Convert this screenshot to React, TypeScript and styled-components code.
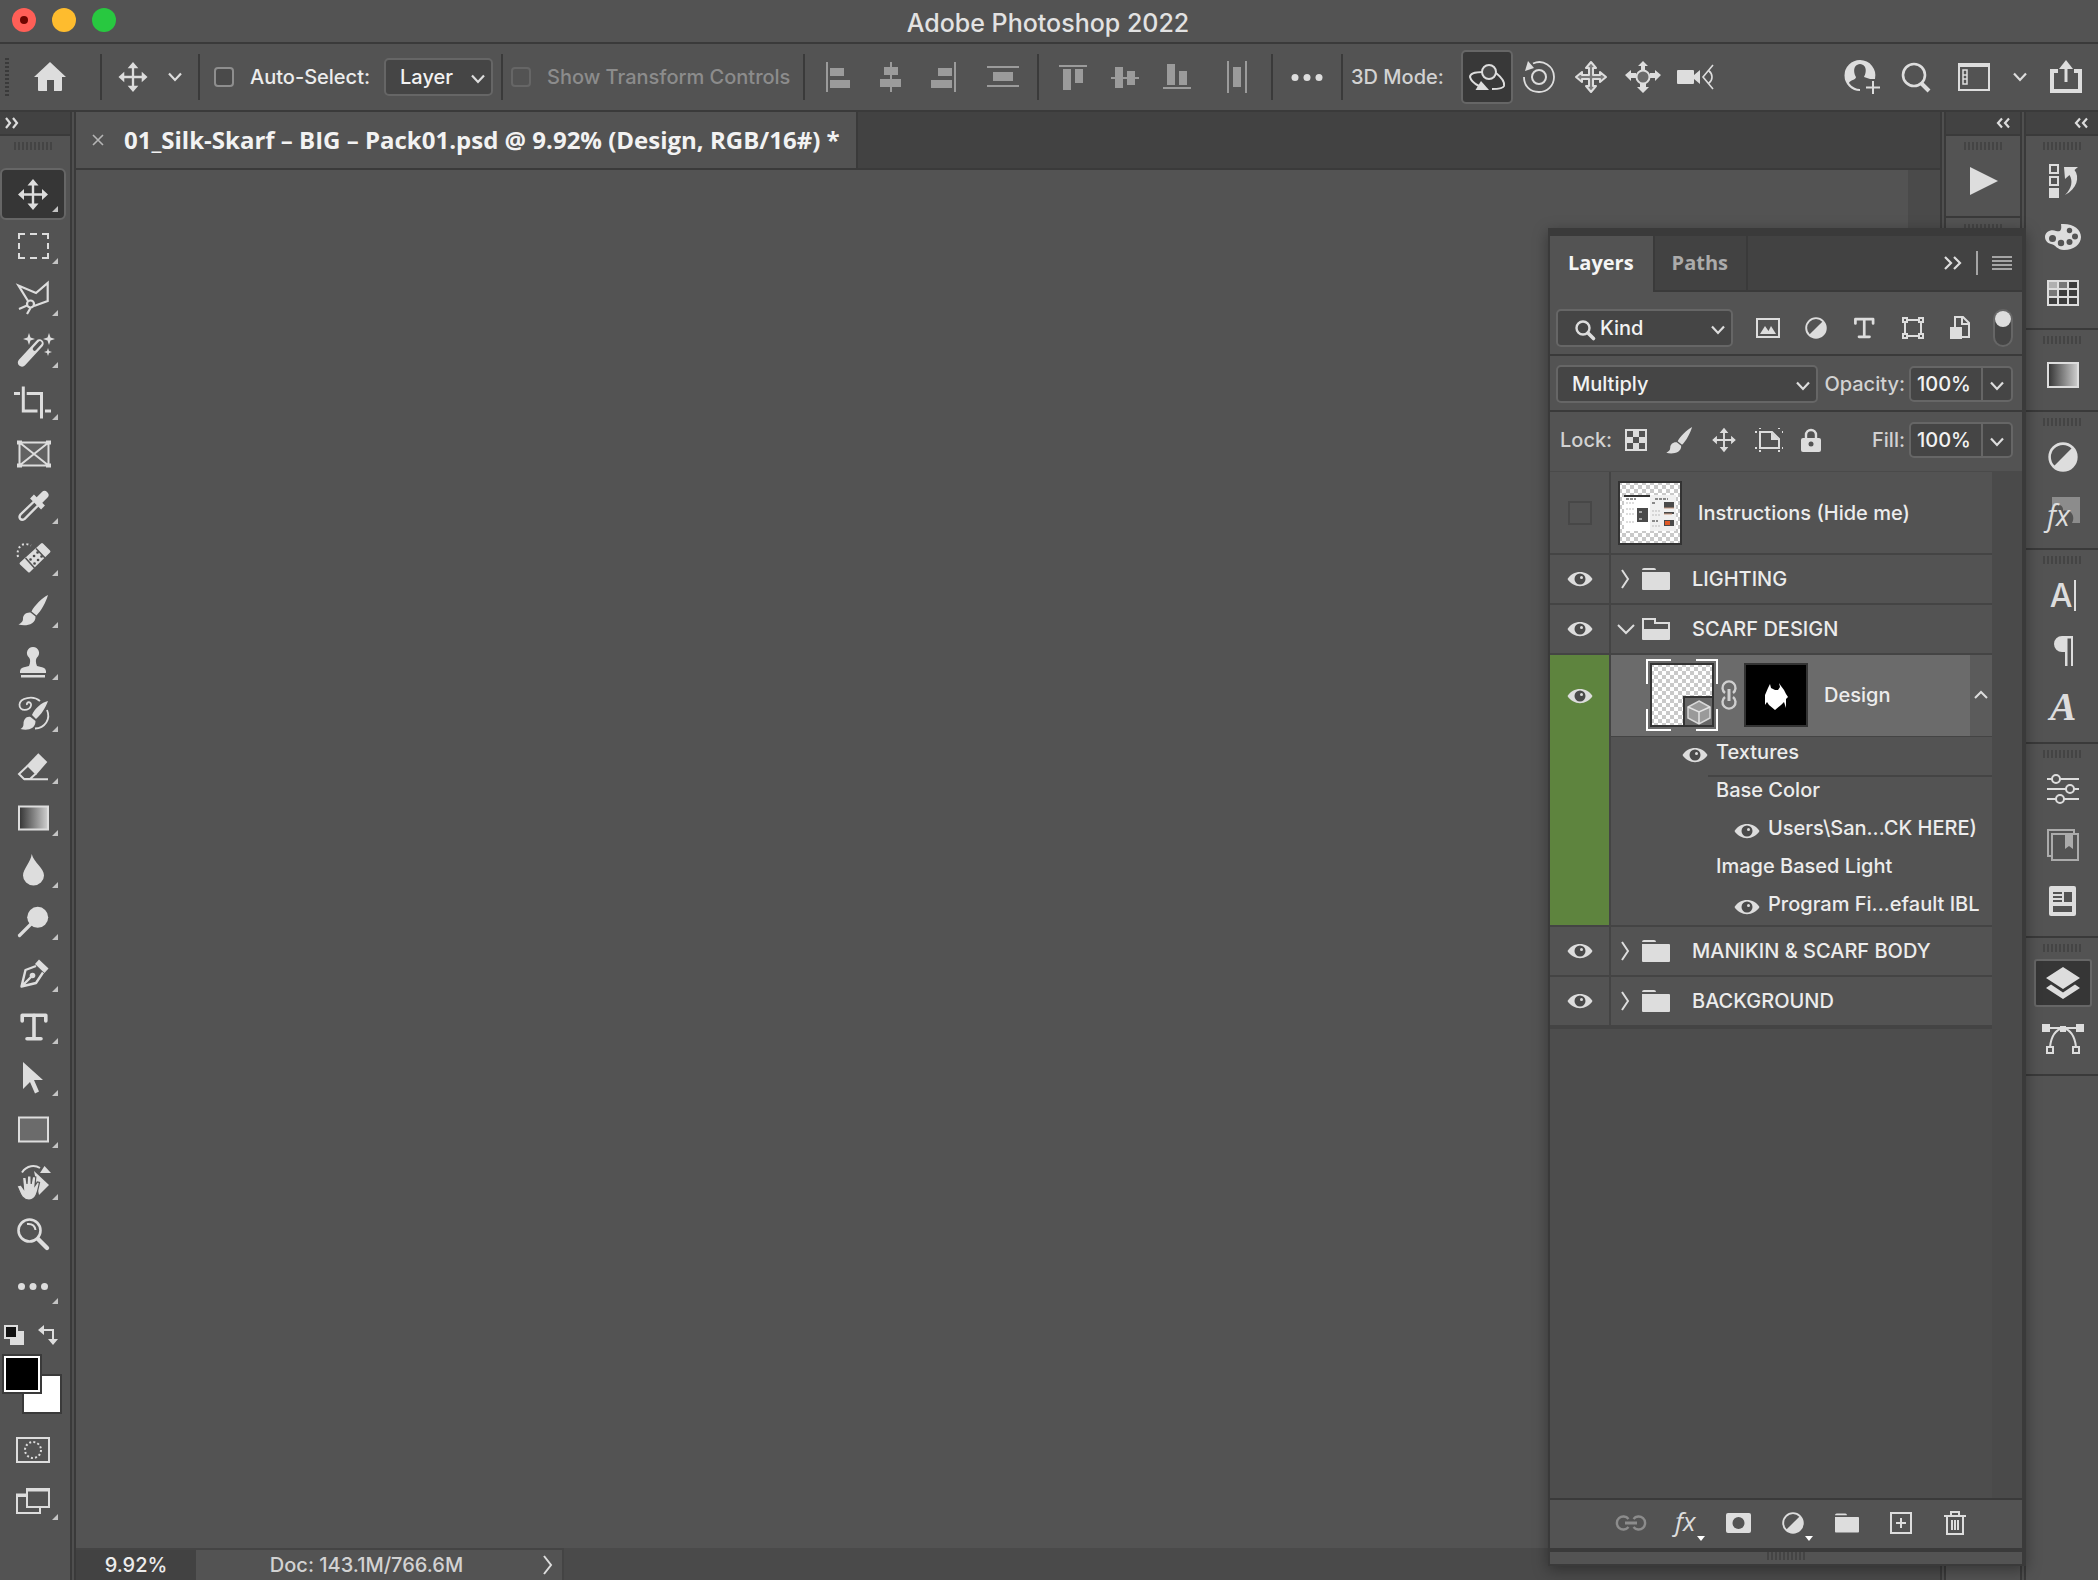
import React from "react";
import styled, { createGlobalStyle, css } from "styled-components";

const c = {
  base: "#535353",
  dark: "#424242",
  line: "#3a3a3a",
  rule: "#444444",
  well: "#4a4a4a",
  field: "#454545",
  edge: "#666666",
  icon: "#dddddd",
  text: "#ececec",
  soft: "#d2d2d2",
  dim: "#8c8c8c",
  green: "#5e843e",
};

const ui = `Inter, "Liberation Sans", sans-serif`;
const heading = `"Open Sans", "Noto Sans", sans-serif`;

const Global = createGlobalStyle`
  * { box-sizing: border-box; }
  body { margin: 0; background: ${c.base}; font-family: ${ui}; font-size: 20px; font-weight: 500; line-height: 26px; color: ${c.text}; }
  button, select, input { font: inherit; color: inherit; margin: 0; padding: 0; border: 0; background: none; }
  ul { list-style: none; margin: 0; padding: 0; }
  svg { display: block; flex: none; overflow: visible; }
`;

const Window = styled.div`
  display: flex;
  flex-direction: column;
  height: 100vh;
  min-width: 1900px;
  overflow: hidden;
`;

/* Title bar */

const TitleBar = styled.header`
  display: grid;
  grid-template-columns: 1fr auto 1fr;
  align-items: center;
  height: 44px;
  padding: 0 14px 0 12px;
  border-bottom: 2px solid ${c.line};
`;

const Lights = styled.div`
  display: flex;
  gap: 16px;
  padding-bottom: 2px;
`;

const Light = styled.button<{ $color: string; $dirty?: boolean }>`
  display: grid;
  place-items: center;
  width: 24px;
  height: 24px;
  border-radius: 50%;
  background: ${(p) => p.$color};
  ${(p) =>
    p.$dirty &&
    css`
      &::after {
        content: "";
        width: 8px;
        height: 8px;
        border-radius: 50%;
        background: #6e0600;
      }
    `}
`;

const Title = styled.h1`
  margin: 0;
  padding-top: 4px;
  font-size: 25px;
  font-weight: 500;
  line-height: 32px;
  color: #e2e2e2;
`;

/* Options bar */

const OptionsBar = styled.div`
  display: flex;
  align-items: center;
  height: 68px;
  border-bottom: 2px solid ${c.line};
`;

const Group = styled.div<{ $width?: number; $pad?: number; $gap?: number; $last?: boolean }>`
  display: flex;
  align-items: center;
  height: 46px;
  width: ${(p) => (p.$width ? p.$width + "px" : "auto")};
  padding-left: ${(p) => p.$pad ?? 0}px;
  gap: ${(p) => p.$gap ?? 0}px;
  border-right: ${(p) => (p.$last ? "0" : `2px solid ${c.line}`)};
  white-space: nowrap;
`;

const SideGrip = styled.span`
  width: 4px;
  height: 38px;
  background: repeating-linear-gradient(${c.line} 0 2px, transparent 2px 4px);
`;

const IconButton = styled.button<{ $width?: number; $active?: boolean }>`
  display: grid;
  place-items: center;
  width: ${(p) => p.$width ?? 52}px;
  height: 54px;
  border-radius: 5px;
  border: 2px solid ${(p) => (p.$active ? c.edge : "transparent")};
  background: ${(p) => (p.$active ? "#383838" : "none")};
`;

const AlignGroup = styled(Group)`
  & > :last-child {
    margin-left: 8px;
  }
`;

const Check = styled.label<{ $off?: boolean }>`
  display: flex;
  align-items: center;
  gap: 16px;
  color: ${(p) => (p.$off ? c.dim : c.text)};
  input {
    appearance: none;
    width: 20px;
    height: 20px;
    border: 2px solid ${(p) => (p.$off ? c.edge : "#8e8e8e")};
    border-radius: 4px;
    background: ${(p) => (p.$off ? "none" : "#4a4a4a")};
  }
`;

const ModeLabel = styled.span`
  width: 110px;
  color: ${c.soft};
`;

const AppActions = styled.div`
  display: flex;
  align-items: center;
  gap: 22px;
  margin-left: auto;
  padding-right: 16px;
`;

const Plain = styled.button`
  display: block;
`;

const Picker = styled.div<{ $width: number }>`
  display: grid;
  grid-template-columns: 1fr 23px;
  align-items: center;
  width: ${(p) => p.$width}px;
  height: 38px;
  select {
    grid-area: 1 / 1 / 2 / 3;
    appearance: none;
    height: 38px;
    padding-left: 14px;
    border: 2px solid ${c.edge};
    border-radius: 5px;
    background: ${c.field};
    color: #f2f2f2;
  }
  svg {
    grid-area: 1 / 2;
    pointer-events: none;
    z-index: 1;
    margin-top: 3px;
  }
`;

const KindPicker = styled(Picker)`
  grid-template-columns: 44px 1fr 23px;
  select {
    grid-area: 1 / 1 / 2 / 4;
    padding-left: 42px;
  }
  svg {
    grid-area: 1 / 3;
  }
  svg:first-of-type {
    grid-area: 1 / 1;
    justify-self: end;
    margin-right: 5px;
  }
`;

/* Workspace */

const Workspace = styled.div`
  position: relative;
  display: flex;
  flex: 1;
  min-height: 0;
`;

const DockHeader = styled.div<{ $right?: boolean }>`
  display: flex;
  align-items: center;
  justify-content: ${(p) => (p.$right ? "flex-end" : "flex-start")};
  height: 24px;
  padding: 0 ${(p) => (p.$right ? 9 : 5)}px;
  background: ${c.dark};
  border-bottom: 2px solid ${c.line};
`;

const Seam = styled.div`
  width: 6px;
  border: solid ${c.line};
  border-width: 0 2px;
  background: #4f4f4f;
`;

const Grip = styled.div`
  width: 38px;
  height: 8px;
  background: repeating-linear-gradient(90deg, ${c.rule} 0 2px, transparent 2px 4px);
`;

const Toolbar = styled.nav`
  display: flex;
  flex-direction: column;
  width: 70px;
  & > ${Grip} {
    margin: 6px 14px 18px;
  }
`;

const Tool = styled.button<{ $active?: boolean; $fly?: boolean }>`
  position: relative;
  display: grid;
  place-items: center;
  width: 66px;
  height: 52px;
  border: 2px solid ${(p) => (p.$active ? c.edge : "transparent")};
  border-radius: 6px;
  background: ${(p) => (p.$active ? "#363636" : "none")};
  ${(p) =>
    p.$fly &&
    css`
      &::after {
        content: "";
        position: absolute;
        right: 6px;
        bottom: 6px;
        border: solid transparent;
        border-width: 6px 0 0 6px;
        border-bottom: 6px solid #c4c4c4;
        border-top: 0;
      }
    `}
`;

const ColorRow = styled.div`
  display: flex;
  justify-content: space-between;
  width: 62px;
  padding: 13px 4px 9px;
`;

const Swatches = styled.div`
  display: grid;
  grid-template-columns: 20px 20px 20px;
  grid-template-rows: 20px 20px 20px;
  margin-left: 2px;
`;

const Swatch = styled.button<{ $front?: boolean }>`
  grid-area: ${(p) => (p.$front ? "1 / 1 / 3 / 3" : "2 / 2 / 4 / 4")};
  z-index: ${(p) => (p.$front ? 1 : 0)};
  border: 2px solid ${c.line};
  background: ${(p) => (p.$front ? "#000" : "#fff")};
  box-shadow: ${(p) => (p.$front ? "inset 0 0 0 2px #fff" : "none")};
`;

const ModeTools = styled.div`
  padding-top: 10px;
`;

const Document = styled.main`
  display: flex;
  flex-direction: column;
  flex: 1;
  min-width: 0;
`;

const Tabs = styled.div`
  display: flex;
  height: 58px;
  background: ${c.dark};
  border-bottom: 2px solid ${c.line};
`;

const DocTab = styled.div`
  display: flex;
  align-items: center;
  gap: 20px;
  min-width: 780px;
  padding: 0 16px;
  border-right: 2px solid ${c.line};
  background: ${c.base};
  font: 700 24px/30px ${heading};
  color: #f2f2f2;
  white-space: nowrap;
`;

const Canvas = styled.div`
  display: flex;
  justify-content: flex-end;
  flex: 1;
`;

const ScrollTrack = styled.div`
  width: 32px;
  background: ${c.well};
`;

const StatusBar = styled.footer`
  display: flex;
  height: 32px;
  background: ${c.well};
`;

const ZoomField = styled.input`
  width: 120px;
  border-top: 2px solid ${c.rule};
  background: ${c.dark};
  text-align: center;
`;

const DocInfo = styled.button`
  display: grid;
  grid-template-columns: 1fr 10px;
  align-items: center;
  gap: 6px;
  width: 368px;
  padding-right: 9px;
  border: solid ${c.rule};
  border-width: 2px 2px 0 0;
  background: ${c.base};
  color: ${c.soft};
`;

const Dock = styled.aside<{ $width: number }>`
  width: ${(p) => p.$width}px;
`;

const DockGroup = styled.div`
  display: flex;
  flex-direction: column;
  align-items: center;
  padding: 6px 0 7px;
  border-bottom: 2px solid ${c.line};
  & > ${Grip} {
    margin-bottom: 3px;
  }
`;

const DockSlot = styled.div`
  display: grid;
  place-items: center;
  height: 56px;
  padding-left: 2px;
`;

const DockButton = styled.button<{ $active?: boolean }>`
  display: grid;
  place-items: center;
  width: 58px;
  height: 48px;
  border: 2px solid ${(p) => (p.$active ? c.edge : "transparent")};
  border-radius: 3px;
  background: ${(p) => (p.$active ? "#363636" : "none")};
`;

const ScriptGlyph = styled.span`
  font: italic 700 40px/36px "Liberation Serif", serif;
  color: ${c.icon};
`;

const CharGlyph = styled.span`
  padding-right: 2px;
  border-right: 2px solid ${c.icon};
  font: 500 32px/31px ${ui};
  color: ${c.icon};
`;

/* Layers panel, floating over the canvas and the first dock column */

const Panel = styled.section`
  position: absolute;
  top: 116px;
  right: 72px;
  bottom: 14px;
  display: flex;
  flex-direction: column;
  width: 478px;
  border: solid ${c.line};
  border-width: 8px 4px 2px 2px;
  background: ${c.base};
  box-shadow: 0 4px 14px rgba(0, 0, 0, 0.35);
`;

const PanelTabs = styled.div`
  display: flex;
  height: 56px;
  background: ${c.dark};
`;

const PanelTab = styled.button<{ $active?: boolean }>`
  padding: ${(p) => (p.$active ? "0 19px 2px 18px" : "0 18px 0 17px")};
  border-right: 2px solid ${c.line};
  border-bottom: ${(p) => (p.$active ? "0" : `2px solid ${c.line}`)};
  background: ${(p) => (p.$active ? c.base : "none")};
  color: ${(p) => (p.$active ? "#f5f5f5" : "#ababab")};
  font: 700 20px/30px ${heading};
`;

const PanelTabTools = styled.div`
  display: flex;
  flex: 1;
  align-items: center;
  justify-content: flex-end;
  gap: 14px;
  padding-right: 10px;
  border-bottom: 2px solid ${c.line};
`;

const Bar = styled.span`
  width: 2px;
  height: 24px;
  background: #a5a5a5;
`;

const PanelRow = styled.div<{ $height: number; $top?: number; $bottom?: number; $soft?: boolean }>`
  display: flex;
  align-items: center;
  height: ${(p) => p.$height}px;
  padding: ${(p) => p.$top ?? 0}px 9px ${(p) => p.$bottom ?? 0}px 6px;
  border-bottom: ${(p) => (p.$soft ? `1px solid ${c.well}` : `2px solid ${c.line}`)};
`;

const FilterIcons = styled.div`
  display: flex;
  flex: 1;
  align-items: center;
  justify-content: space-between;
  padding: 0 22px 0 23px;
`;

const Switch = styled.input`
  appearance: none;
  width: 20px;
  height: 38px;
  border: 2px solid ${c.edge};
  border-radius: 10px;
  background: ${c.field};
  &::before {
    content: "";
    display: block;
    width: 16px;
    height: 16px;
    border-radius: 50%;
    background: ${c.icon};
  }
`;

const FieldLabel = styled.label`
  margin-left: auto;
  padding-right: 4px;
  color: ${c.soft};
`;

const Combo = styled.div`
  display: flex;
  width: 104px;
  height: 36px;
  border: 2px solid ${c.edge};
  border-radius: 5px;
  background: ${c.field};
  input {
    width: 72px;
    padding-left: 6px;
    border-right: 2px solid ${c.edge};
    color: #f2f2f2;
  }
  button {
    display: grid;
    flex: 1;
    place-items: center;
    padding-top: 3px;
  }
`;

const LockIcons = styled.div`
  display: flex;
  align-items: center;
  gap: 18px;
  padding-left: 13px;
`;

const LockLabel = styled.span`
  padding-left: 4px;
  color: ${c.soft};
`;

const ListArea = styled.div`
  flex: 1;
  padding-right: 30px;
  background: linear-gradient(90deg, #4d4d4d calc(100% - 30px), ${c.well} 0);
`;

const LayerList = styled.ul`
  border-bottom: 2px solid ${c.rule};
`;

const LayerItem = styled.li`
  display: flex;
  border-bottom: 2px solid ${c.rule};
  background: ${c.base};
`;

const EyeCell = styled.div<{ $green?: boolean }>`
  width: 61px;
  border-right: 2px solid ${c.rule};
  background: ${(p) => (p.$green ? c.green : "none")};
`;

const EyeButton = styled.button<{ $height: number }>`
  display: grid;
  place-items: center;
  width: 100%;
  height: ${(p) => p.$height}px;
  padding-left: 1px;
`;

const HiddenEye = styled.span`
  width: 24px;
  height: 24px;
  border: 2px solid #474747;
`;

const LayerBody = styled.div`
  flex: 1;
  min-width: 0;
`;

const LayerLine = styled.div<{ $height: number; $pad?: number }>`
  display: flex;
  align-items: center;
  height: ${(p) => p.$height}px;
  padding-left: ${(p) => p.$pad ?? 7}px;
`;

const FolderMark = styled.span`
  display: flex;
  align-items: center;
  gap: 8px;
  width: 74px;
`;

const Selected = styled(LayerLine)`
  padding-bottom: 1px;
  background: linear-gradient(90deg, #6b6b6b calc(100% - 22px), #5b5b5b 0);
  border-bottom: 1px solid ${c.rule};
`;

const Name = styled.span`
  padding-left: 16px;
`;

const Expand = styled.button`
  width: 22px;
  margin-left: auto;
  display: grid;
  place-items: center;
`;

const SubList = styled.ul`
  display: flex;
  flex-direction: column;
  gap: 12px;
  padding-bottom: 8px;
`;

const SubEye = styled.span`
  padding-top: 5px;
`;

const SubHead = styled.div`
  display: flex;
  height: 40px;
  padding: 2px 0 0 71px;
  ${SubEye} {
    padding-top: 8px;
  }
`;

const SubHeadText = styled.span`
  flex: 1;
  padding-left: 8px;
  border-bottom: 2px solid ${c.rule};
`;

const SubItem = styled.li<{ $deep?: boolean }>`
  display: flex;
  align-items: center;
  gap: 8px;
  height: 26px;
  padding-left: ${(p) => (p.$deep ? 123 : 105)}px;
  white-space: nowrap;
`;

const PanelFooter = styled.div`
  display: flex;
  justify-content: center;
  height: 50px;
  padding: 0 0 2px 14px;
  border-top: 2px solid ${c.line};
`;

const FooterButton = styled.button<{ $menu?: boolean }>`
  position: relative;
  display: grid;
  place-items: center;
  width: 54px;
  ${(p) =>
    p.$menu &&
    css`
      &::after {
        content: "";
        position: absolute;
        right: 7px;
        bottom: 5px;
        border: solid transparent;
        border-width: 0 4px;
        border-top: 5px solid #fff;
      }
    `}
`;

const PanelResize = styled.div`
  display: flex;
  justify-content: center;
  height: 16px;
  border-top: 4px solid ${c.line};
`;

/* Icons */

type Draw = { w?: number; h?: number; children: React.ReactNode };
const Icon = ({ w = 32, h = 32, children }: Draw) => (
  <svg width={w} height={h} viewBox={`0 0 ${w} ${h}`} fill="none" stroke={c.icon} strokeWidth="2" aria-hidden="true">
    {children}
  </svg>
);
const solid = { fill: c.icon, stroke: "none" };

const Chevron = () => (
  <Icon w={16} h={10}>
    <path d="M2 1.500l6 6.500 6-6.500" strokeWidth="2.200" />
  </Icon>
);
const Doubles = ({ left, w = 16 }: { left?: boolean; w?: number }) => (
  <Icon w={w} h={12}>
    {left ? (
      <path d="M7 1.500L3 6l4 4.500M14 1.500L10 6l4 4.500" strokeWidth="2.200" />
    ) : (
      <path d={w > 16 ? "M1 0l6 6-6 6M10 0l6 6-6 6" : "M1 1l4 5-4 5M8 1l4 5-4 5"} strokeWidth="2.200" />
    )}
  </Icon>
);

const MovePath = () => (
  <g>
    <path d="M16 5v23M5 16.500h22" strokeWidth="2.400" />
    <path {...solid} d="M16 1l5.500 6.500h-11zM16 32l5.500-6.500h-11zM1 16.500l6-5.500v11zM31 16.500l-6-5.500v11z" />
  </g>
);
const Move = ({ size = 32 }: { size?: number }) => (
  <svg width={size} height={size} viewBox="0 0 32 33" stroke={c.icon} fill="none" aria-hidden="true">
    <MovePath />
  </svg>
);
const BrushPath = () => (
  <path {...solid} d="M31 1C25 4 17 12 14.500 17.500L19.500 21.500C24 17 29 8 31 1zM13.500 18.500C9 18 6 21 6 24.500 6 28 4 29 1.500 30.500 8 32.500 19 31 18.500 22.500z" />
);
const Brush = ({ size = 32 }: { size?: number }) => (
  <svg width={size} height={size} viewBox="0 0 32 32" aria-hidden="true">
    <BrushPath />
  </svg>
);
const TeePath = () => (
  <path
    d="M5.200 11V5.200h23.600V11M17 5v23.500M10 28.700h14"
    strokeWidth="3.600"
    strokeLinejoin="round"
    strokeLinecap="round"
  />
);

const HalfCircle = ({ size }: { size: number }) => (
  <svg width={size} height={size} viewBox="0 0 28 28" fill="none" stroke={c.icon} strokeWidth="2.400" aria-hidden="true">
    <circle cx="14" cy="14" r="12.500" />
    <path {...solid} d="M23 5A12.700 12.700 0 0 1 5 23z" />
  </svg>
);

const Eye = () => (
  <Icon w={26} h={16}>
    <path {...solid} d="M.5 8C6-1.500 20-1.500 25.500 8 20 17.500 6 17.500.5 8z" />
    <circle cx="13" cy="8" r="5.500" fill="#4a4a4a" stroke="none" />
    <circle cx="14.500" cy="6.500" r="1.500" {...solid} />
  </Icon>
);
const Folder = ({ open, w = 28 }: { open?: boolean; w?: number }) => (
  <svg width={w} height={w === 28 ? 22 : 20} viewBox="0 0 28 22" fill="none" stroke={c.icon} strokeWidth="2" aria-hidden="true">
    {open ? (
      <>
        <path d="M1 12V1h12v4h14v7" />
        <path {...solid} d="M0 11h28v10a1 1 0 0 1-1 1H1a1 1 0 0 1-1-1z" />
      </>
    ) : (
      <path {...solid} d="M0 2a2 2 0 0 1 2-2h10a2 2 0 0 1 2 2zM0 4h27a1 1 0 0 1 1 1v16a1 1 0 0 1-1 1H1a1 1 0 0 1-1-1z" />
    )}
  </svg>
);

const star = (x: number, y: number, r: number) =>
  `M${x} ${y - r}L${x + r * 0.25} ${y - r * 0.25} ${x + r} ${y} ${x + r * 0.25} ${y + r * 0.25} ${x} ${y + r} ${x - r * 0.25} ${y + r * 0.25} ${x - r} ${y} ${x - r * 0.25} ${y - r * 0.25}z`;

const tools: { name: string; fly?: boolean; art: React.ReactNode }[] = [
  { name: "Move", fly: true, art: <MovePath /> },
  {
    name: "Rectangular marquee",
    fly: true,
    art: <path d="M2 9V4h6M13 4h7M25 4h6v5M31 13v6M31 23v5h-6M20 28h-7M8 28H2v-5M2 19v-6" />,
  },
  {
    name: "Polygonal lasso",
    fly: true,
    art: (
      <g>
        <path d="M11 19L1.500 3.500 19 11 30.700 1v18L17 24M10 23.500L2 27M13.500 26L10 32" strokeWidth="2.200" />
        <circle cx="13.500" cy="22" r="3.500" strokeWidth="2.200" />
      </g>
    ),
  },
  {
    name: "Magic wand",
    fly: true,
    art: (
      <g>
        <path d="M5 28.500L22.500 9.500" strokeWidth="8.400" strokeLinecap="round" />
        <path d="M17.500 15L23 9" stroke={c.base} strokeWidth="3.600" strokeLinecap="round" />
        <path {...solid} d={star(12, 5, 6) + star(32, 5, 6) + star(31, 18, 4)} />
      </g>
    ),
  },
  { name: "Crop", fly: true, art: <path d="M-3 7.600h6M6.300.4V25H20.500M9.700 7.600h14.800v25M28 25h6" strokeWidth="3" /> },
  {
    name: "Frame",
    art: (
      <g>
        <path d="M2.500 4.500h29v23h-29zM2.500 4.500l29 23M31.500 4.500l-29 23" fill="#626262" />
        <path {...solid} d="M0 2.500h5v4H0zM29 2.500h5v4h-5zM0 25.500h5v4H0zM29 25.500h5v4h-5z" />
      </g>
    ),
  },
  {
    name: "Eyedropper",
    fly: true,
    art: (
      <g>
        <path d="M22 10.500L27.500 5" strokeWidth="8" strokeLinecap="round" />
        <path d="M15 6.500l11 11" strokeWidth="5.500" />
        <path d="M17 11.500L3.500 24.500C1 28 4 31 7.500 29L21 15.500" strokeWidth="2.400" />
      </g>
    ),
  },
  {
    name: "Spot healing",
    fly: true,
    art: (
      <g>
        <path {...solid} strokeLinejoin="round" d="M3 22.500Q2 21.500 3 20.500L24 1.500Q25 .5 26 1.500L33 8.500Q34 9.500 33 10.500L13 30Q12 31 11 30z" />
        <path d="M8.500 16l9 10M19 6.500l9 9.500" stroke={c.base} strokeWidth="1.600" />
        <path d="M13.500 17.500h.1M17.500 21.500h.1M17 14h.1M21 18h.1M20.500 10.500h.1M24.500 14.500h.1" stroke="#4a4a4a" strokeWidth="2.600" strokeLinecap="round" />
        <path d="M1 15C-1 6 5-1 14 3.500" strokeDasharray="2 2.500" />
      </g>
    ),
  },
  { name: "Brush", fly: true, art: <BrushPath /> },
  {
    name: "Clone stamp",
    fly: true,
    art: <path {...solid} d="M16 1a6 6 0 0 1 4 10.500c-1.500 1.500-1.500 5 0 8.500l6 1.500a4 4 0 0 1 3 3.500v2H3v-2a4 4 0 0 1 3-3.500l6-1.500c1.500-3.500 1.500-7 0-8.500A6 6 0 0 1 16 1zM4 29h24v2.500H4z" />,
  },
  {
    name: "History brush",
    fly: true,
    art: (
      <g>
        <path {...solid} d="M31 3C25 4 17 11 15 17l4 4C24 17 29 9 31 3zM13.500 19C9 18 6.500 22 6.500 26c0 3-1.500 4-3 5 7 2 15 0 15-8z" />
        <path d="M10 7c-1-4 5-3.500 4 .5C13 13 2 14 2.500 6.500 3 0 16-3 23 3M30 12c4 9-2 18-12 18.500" strokeWidth="1.800" />
      </g>
    ),
  },
  {
    name: "Eraser",
    fly: true,
    art: (
      <g>
        <path {...solid} d="M21.300 3.300l9 8.700L19 25l-9.500-9.500z" />
        <path d="M10.500 16L2 24l5 5h6l6-5.500M7 29.200h24" />
      </g>
    ),
  },
  { name: "Gradient", fly: true, art: <path d="M2 4.500h29v23H2z" fill="url(#fade)" /> },
  { name: "Blur", fly: true, art: <path {...solid} d="M14.700 0C17 9 27 14 27 21.500a10.500 10 0 0 1-21 0C6 15 14 8 14.700 0z" /> },
  {
    name: "Dodge",
    fly: true,
    art: (
      <g>
        <circle cx="20.700" cy="11.300" r="10.500" {...solid} />
        <path d="M15 17L2.500 29.500" strokeWidth="3.200" strokeLinecap="round" />
      </g>
    ),
  },
  {
    name: "Pen",
    fly: true,
    art: (
      <g>
        <path {...solid} d="M22 1.500l9.500 9-4 4.500-9.500-9z" />
        <path d="M19 8L8.500 12 4.500 28.500 19 25l7-10.500M5 28L15 18" strokeWidth="2.400" strokeLinejoin="round" />
        <circle cx="15.500" cy="17.500" r="2.800" {...solid} />
      </g>
    ),
  },
  { name: "Type", fly: true, art: <TeePath /> },
  { name: "Path selection", fly: true, art: <path {...solid} d="M6 0l20 18h-9l5 11.500-4 2L13 20l-7 7z" /> },
  { name: "Rectangle", fly: true, art: <path d="M2 3.500h29v24H2z" fill="#6b6b6b" /> },
  {
    name: "Rotate view",
    fly: true,
    art: (
      <g>
        <path {...solid} d="M17 5l15 14-10 10z" />
        <path d="M5 6.500C10-1 18-1 23 2" />
        <path {...solid} d="M27.500 0L34 7H23z" />
        <path
          {...solid}
          stroke={c.base}
          strokeWidth="1.200"
          d="M0 20l4-1 2.500 3.500L5.500 11.500h3.500L10 18l.5-8h3.500l.2 8 1.300-7.500 3.300.5-.8 8.500L20.500 16l2 .5C21 22 20.500 34 12 34 4 34 3 26 0 20z"
        />
      </g>
    ),
  },
  {
    name: "Zoom",
    art: (
      <g>
        <circle cx="12.500" cy="12.500" r="11" strokeWidth="2.600" />
        <path d="M21 21l9 9" strokeWidth="4.400" strokeLinecap="round" />
        <path d="M10 6c5-.5 8 2 8.500 6" />
      </g>
    ),
  },
  {
    name: "Edit toolbar",
    fly: true,
    art: (
      <g {...solid}>
        <circle cx="4.500" cy="16.500" r="3.500" />
        <circle cx="16" cy="16.500" r="3.500" />
        <circle cx="27.500" cy="16.500" r="3.500" />
      </g>
    ),
  },
];

const modes: { name: string; fly?: boolean; art: React.ReactNode }[] = [
  {
    name: "Quick mask",
    art: (
      <g>
        <path d="M0 4h32v24H0z" />
        <circle cx="16" cy="16" r="8" strokeDasharray="2 2.200" />
      </g>
    ),
  },
  {
    name: "Screen mode",
    fly: true,
    art: (
      <g>
        <path d="M10 8.500H0V27h23v-6M10 3h22v18H10z" />
        <path d="M10 4h22M0 9.500h10" strokeWidth="3" />
      </g>
    ),
  },
];

const grey = "#9b9b9b";
const alignA = [
  ["Align left", "M1 1v30", "M4 7h14v8H4zM4 19h20v8H4z"],
  ["Align horizontal centers", "M13 1v30", "M6 6h14v8H6zM2 18h21v8H2z"],
  ["Align right", "M25 1v30", "M8 7h14v8H8zM1 19h21v8H1z"],
  ["Distribute vertically", "M-3 6h32M-3 25h32", "M3 11h20v9H3z"],
];
const alignB = [
  ["Align top", "M-1 5h28", "M3 8h8v21H3zM15 8h8v14h-8z"],
  ["Align vertical centers", "M-1 17h28", "M3 6h8v21H3zM15 10h8v14h-8z"],
  ["Align bottom", "M-1 27h28", "M3 3h8v21H3zM15 10h8v14h-8z"],
  ["Distribute horizontally", "M4 0v32M22 0v32", "M9 6h8v20H9z"],
];

const AlignButtons = ({ set }: { set: string[][] }) => (
  <>
    {set.map(([name, line, blocks]) => (
      <IconButton key={name} aria-label={name}>
        <Icon w={26}>
          <path d={line} stroke={grey} />
          <path d={blocks} fill={grey} stroke="none" />
        </Icon>
      </IconButton>
    ))}
  </>
);

const modes3d: [string, React.ReactNode][] = [
  [
    "Orbit",
    <g key="o">
      <path d="M12 11C3 11-1 13-1 16 0 20 4 23 8 25M25 12C30 16 34 21 33 25 32 28 26 28 21 28" />
      <circle cx="18" cy="11" r="7" fill="#4a4a4a" />
      <path {...solid} d="M10 20l8 9H4.500z" />
    </g>,
  ],
  [
    "Roll",
    <g key="r">
      <circle cx="16" cy="16" r="7" />
      <path d="M10 2.500C20-2 31 5 31 16 31 25 24 31 16 31 7 31 1 25 1 16" strokeWidth="1.800" />
      <path {...solid} d="M5 0l6 7-9 3z" />
    </g>,
  ],
  [
    "Pan",
    <path
      key="p"
      fill="#7a7a7a"
      d="M16 1l5 6h-3v7h7v-3l6 5-6 5v-3h-7v7h3l-5 6-5-6h3v-7H7v3l-6-5 6-5v3h7V7h-3z"
      strokeLinejoin="round"
    />,
  ],
  [
    "Slide",
    <g key="s">
      <circle cx="16" cy="16" r="6.500" fill="#6a6a6a" />
      <path {...solid} d="M16 0l5 5h-3v4h-4V5h-3zM16 32l6-6h-3v-4h-6v4h-3zM-2 14l6-5v3h5v5H4v3zM34 14l-6-5v3h-5v5h5v3z" />
    </g>,
  ],
  [
    "Zoom camera",
    <g key="z">
      <path {...solid} d="M-1 9h15a1 1 0 0 1 1 1v4l6-5v14l-6-5v4a1 1 0 0 1-1 1H-1a1 1 0 0 1-1-1V10a1 1 0 0 1 1-1z" />
      <path d="M34 4L24 16l10 12M30 10c4 3 4 9 0 12" strokeWidth="1.600" />
    </g>,
  ],
];

const Fx = ({ size, x = 0, y = 24 }: { size: number; x?: number; y?: number }) => (
  <text x={x} y={y} {...solid} fontFamily={`"Open Sans", sans-serif`} fontStyle="italic" fontSize={size}>
    fx
  </text>
);

const dockGroups: { name: string; active?: boolean; art: React.ReactNode }[][] = [
  [
    {
      name: "History",
      art: (
        <Icon h={34}>
          <path d="M3 1h8v8H3zM3 13h8v8H3z" />
          <path {...solid} d="M2 24h10v10H2zM17 3h14l-3.500 3C33 13 30 25 18 31c7-7 8-14 4.500-20L18 15z" />
        </Icon>
      ),
    },
    {
      name: "Color",
      art: (
        <Icon w={36} h={26}>
          <path {...solid} d="M16 0C28-1 36 5 36 13c0 7-7 13-17 13C12 26 11 21 6 20 2 19 0 16 0 13 0 8 6 5 11 7c4 1 6 0 5-7z" />
          <g fill={c.base} stroke="none">
            <circle cx="7.500" cy="14.500" r="3.500" />
            <circle cx="16" cy="19" r="3.200" />
            <circle cx="24.500" cy="18" r="3" />
            <circle cx="30" cy="12.500" r="3" />
            <circle cx="24.500" cy="6.500" r="2.700" />
          </g>
        </Icon>
      ),
    },
    {
      name: "Swatches",
      art: (
        <Icon h={26}>
          <path d="M1 1h10v8H1z" fill="#b0b0b0" />
          <path d="M11 1h10v8H11zM1 9h10v8H1z" fill="#777" />
          <path d="M21 1h10v8H21zM11 9h10v8H11zM21 9h10v8H21zM1 17h10v8H1zM11 17h10v8H11zM21 17h10v8H21z" fill="#3d3d3d" />
        </Icon>
      ),
    },
  ],
  [
    {
      name: "Gradients",
      art: (
        <Icon h={26}>
          <path d="M1 1h30v24H1z" fill="url(#fade)" />
        </Icon>
      ),
    },
  ],
  [
    { name: "Adjustments", art: <HalfCircle size={30} /> },
    {
      name: "Styles",
      art: (
        <Icon w={34} h={32}>
          <path d="M6 0h28v26H26C30 18 24 12 17 14 18 8 11 6 6 9z" fill="#8c8c8c" stroke="none" />
          <Fx size={29} x={1} y={29} />
        </Icon>
      ),
    },
  ],
  [
    { name: "Character", art: <CharGlyph>A</CharGlyph> },
    {
      name: "Paragraph",
      art: (
        <Icon w={24} h={30}>
          <path {...solid} d="M13 0h9v30h-2V2.500h-3.500V30H14V16h-3A8 8 0 0 1 11 0z" />
        </Icon>
      ),
    },
    { name: "Glyphs", art: <ScriptGlyph>A</ScriptGlyph> },
  ],
  [
    {
      name: "Properties",
      art: (
        <Icon>
          <path d="M0 6h32M0 16h32M0 26h32" />
          <g fill={c.base}>
            <circle cx="9" cy="6" r="4" />
            <circle cx="23" cy="16" r="4" />
            <circle cx="13" cy="26" r="4" />
          </g>
        </Icon>
      ),
    },
    {
      name: "Libraries",
      art: (
        <Icon>
          <g stroke="#ababab">
            <path d="M4 27H1V1h26v3M5 5h26v26H5z" />
            <path d="M18 5h8v15l-4-3-4 3z" fill="#ababab" stroke="none" />
          </g>
        </Icon>
      ),
    },
    {
      name: "Info",
      art: (
        <Icon w={28} h={30}>
          <rect width="27" height="30" rx="2" {...solid} />
          <path d="M4 7h9M4 11h9M4 15h9" stroke={c.base} />
          <path d="M15 6h8v10h-8zM4 20h19v6H4z" fill={c.base} stroke="none" />
        </Icon>
      ),
    },
  ],
  [
    {
      name: "Layers",
      active: true,
      art: (
        <Icon w={34}>
          <path {...solid} d="M17 0l17 11-17 11L0 11zM5 17.500l12 8 12-8 5 3.500-17 11L0 21z" />
        </Icon>
      ),
    },
    {
      name: "Paths",
      art: (
        <Icon w={42} h={30}>
          <path d="M4 4h34M21 4C12 6 9 14 8 23M21 4c9 2 12 10 13 19" />
          <path {...solid} d="M0 0h8v8H0zM34 0h8v8h-8zM18 2h6v6h-6z" />
          <path d="M5 23h6v6H5zM31 23h6v6h-6z" fill={c.base} />
        </Icon>
      ),
    },
  ],
];

const Checker = ({ id }: { id: string }) => (
  <pattern id={id} width="8" height="8" patternUnits="userSpaceOnUse">
    <path d="M0 0h8v8H0z" fill="#fff" />
    <path d="M0 0h4v4H0zM4 4h4v4H4z" fill="#c9c9c9" />
  </pattern>
);

const InstructionThumb = () => (
  <svg width="64" height="64" viewBox="0 0 64 64" aria-hidden="true">
    <defs>
      <Checker id="chk1" />
    </defs>
    <path d="M1 1h62v62H1z" fill="url(#chk1)" stroke="#333" strokeWidth="2" />
    <path d="M6 14h26v36H6z" fill="#fff" />
    <path d="M32 14h26v36H32z" fill="#f0f0f0" />
    <path d="M6 14h26v2H6z" fill="#333" />
    <path d="M8 18h10M37 18h13M34 22h4M34 40h6" stroke="#222" strokeDasharray="3 1" />
    <path d="M8 22h9M8 28h9M8 33h9M8 41h9M34 30h9M34 34h8M34 45h8" stroke="#bbb" strokeDasharray="2 1" />
    <path d="M19 27h11v14H19zM46 21h10v6H46zM46 31h10v2H46zM46 39h10v6H46z" fill="#4a4a4a" />
    <path d="M47 40h5v4h-5z" fill="#e05a28" />
    <path d="M21 31h3M21 38h3" stroke="#fff" />
    <path d="M46 27h10M46 33h8" stroke="#c99a80" />
  </svg>
);

const DesignThumb = () => (
  <svg width="72" height="72" viewBox="0 0 72 72" fill="none" aria-hidden="true">
    <defs>
      <Checker id="chk2" />
    </defs>
    <path d="M5 5h62v62H5z" fill="url(#chk2)" stroke="#333" strokeWidth="2" />
    <path d="M38 38h29v29H38z" fill="#666" stroke="#333" strokeWidth="2" />
    <path d="M1 25V1h24M50 1h21v24M71 50v21H50M25 71H1V50" stroke="#fff" strokeWidth="2" />
    <path d="M53 42l11 6v11l-11 6-11-6V48z" fill="#9a9a9a" stroke="#d8d8d8" strokeWidth="1.500" />
    <path d="M42 48l11 5 11-5M53 53v12" stroke="#e4e4e4" strokeWidth="1.500" />
  </svg>
);

const MaskThumb = () => (
  <svg width="64" height="64" viewBox="0 0 64 64" aria-hidden="true">
    <path d="M1 1h62v62H1z" fill="#000" stroke="#333" strokeWidth="2" />
    <path d="M26 21l1 4 4 2h3l2-3-1-4 2 3 3 4 2 4 2 3-2 2v9l-2-6-3 3-6 5-6-5-2-3-2 3V32l3-7z" fill="#fff" />
  </svg>
);

const ChainLink = () => (
  <Icon w={16} h={30}>
    <g stroke="#cfcfcf" strokeWidth="2.400">
      <path d="M4 13A6.500 6.500 0 1 1 12 13M4 17A6.500 6.500 0 1 0 12 17" />
      <path d="M8 9v12" strokeWidth="3" />
    </g>
  </Icon>
);

const GroupRow = ({ name, open }: { name: string; open?: boolean }) => (
  <LayerItem>
    <EyeCell>
      <EyeButton $height={48} aria-label={`Toggle ${name}`}>
        <Eye />
      </EyeButton>
    </EyeCell>
    <LayerBody>
      <LayerLine $height={48}>
        <FolderMark>
          <Icon w={16} h={20}>
            {open ? <path d="M0 6l8 8 8-8" /> : <path d="M4 1l6 9-6 9" />}
          </Icon>
          <Folder open={open} />
        </FolderMark>
        {name}
      </LayerLine>
    </LayerBody>
  </LayerItem>
);

const LayersPanel = () => (
  <Panel aria-label="Layers">
    <PanelTabs>
      <PanelTab $active>Layers</PanelTab>
      <PanelTab>Paths</PanelTab>
      <PanelTabTools>
        <Plain aria-label="Collapse panel">
          <Doubles w={18} />
        </Plain>
        <Bar />
        <Plain aria-label="Panel menu">
          <Icon w={20} h={14}>
            <path d="M0 1h20M0 5h20M0 9h20M0 13h20" stroke="#a5a5a5" />
          </Icon>
        </Plain>
      </PanelTabTools>
    </PanelTabs>

    <PanelRow $height={64} $top={10}>
      <KindPicker $width={177}>
        <select aria-label="Filter type" defaultValue="Kind">
          <option>Kind</option>
        </select>
        <Icon w={20} h={20}>
          <circle cx="8" cy="8" r="6.500" strokeWidth="2.400" />
          <path d="M13 13l5.500 5.500" strokeWidth="3.600" strokeLinecap="round" />
        </Icon>
        <Chevron />
      </KindPicker>
      <FilterIcons>
        <Plain aria-label="Pixel layers">
          <Icon w={24} h={20}>
            <path d="M1 1h22v18H1z" />
            <path {...solid} d="M4 16l5-8 3.500 5L15 8l5 8z" />
          </Icon>
        </Plain>
        <Plain aria-label="Adjustment layers">
          <HalfCircle size={22} />
        </Plain>
        <Plain aria-label="Type layers">
          <svg width="24" height="24" viewBox="2 1 32 32" fill="none" stroke={c.icon} aria-hidden="true">
            <TeePath />
          </svg>
        </Plain>
        <Plain aria-label="Shape layers">
          <Icon w={22} h={22}>
            <path d="M3 3h16v16H3z" />
            <path d="M1 1h4v4H1zM17 1h4v4h-4zM1 17h4v4H1zM17 17h4v4h-4z" fill={c.base} />
          </Icon>
        </Plain>
        <Plain aria-label="Smart objects">
          <Icon w={22} h={24}>
            <path d="M6 12V1h8l6 6v14h-9M13 1v7h7" />
            <path {...solid} d="M1 11h12v12H1z" />
          </Icon>
        </Plain>
      </FilterIcons>
      <Switch type="checkbox" role="switch" aria-label="Layer filtering" />
    </PanelRow>

    <PanelRow $height={56} $top={2}>
      <Picker $width={262}>
        <select aria-label="Blend mode" defaultValue="Multiply">
          <option>Multiply</option>
        </select>
        <Chevron />
      </Picker>
      <FieldLabel htmlFor="opacity">Opacity:</FieldLabel>
      <Combo>
        <input id="opacity" defaultValue="100%" />
        <button aria-label="Opacity slider">
          <Chevron />
        </button>
      </Combo>
    </PanelRow>

    <PanelRow $height={60} $bottom={3} $soft>
      <LockLabel>Lock:</LockLabel>
      <LockIcons>
        <Plain aria-label="Lock transparent pixels">
          <Icon w={22} h={22}>
            <path d="M1 1h20v20H1z" />
            <path {...solid} d="M8 2h6v6H8zM2 8h6v6H2zM14 8h6v6h-6zM8 14h6v6H8z" />
          </Icon>
        </Plain>
        <Plain aria-label="Lock image pixels">
          <Brush size={28} />
        </Plain>
        <Plain aria-label="Lock position">
          <Move size={26} />
        </Plain>
        <Plain aria-label="Lock artboard nesting">
          <Icon w={28} h={24}>
            <path d="M5 4h12l7 7v9H5z" />
            <path {...solid} d="M16 4l8 8h-8z" />
            <path d="M5 0v1M24 0v1M5 22v2M24 22v2M0 4h2M27 4h1M0 20h2M27 20h1" />
          </Icon>
        </Plain>
        <Plain aria-label="Lock all">
          <Icon w={20} h={24}>
            <path d="M5 11V7a5 5 0 0 1 10 0v4" strokeWidth="2.400" />
            <rect y="10" width="20" height="14" rx="2" {...solid} />
            <circle cx="10" cy="16" r="2.500" fill={c.base} stroke="none" />
          </Icon>
        </Plain>
      </LockIcons>
      <FieldLabel htmlFor="fill">Fill:</FieldLabel>
      <Combo>
        <input id="fill" defaultValue="100%" />
        <button aria-label="Fill slider">
          <Chevron />
        </button>
      </Combo>
    </PanelRow>

    <ListArea>
      <LayerList>
        <LayerItem>
          <EyeCell>
            <EyeButton $height={81} aria-label="Show Instructions">
              <HiddenEye />
            </EyeButton>
          </EyeCell>
          <LayerBody>
            <LayerLine $height={81}>
              <InstructionThumb />
              <Name>Instructions (Hide me)</Name>
            </LayerLine>
          </LayerBody>
        </LayerItem>
        <GroupRow name="LIGHTING" />
        <GroupRow name="SCARF DESIGN" open />
        <LayerItem>
          <EyeCell $green>
            <EyeButton $height={81} aria-label="Toggle Design">
              <Eye />
            </EyeButton>
          </EyeCell>
          <LayerBody>
            <Selected $height={82} $pad={35}>
              <DesignThumb />
              <LayerLine as="span" $height={72} $pad={3}>
                <ChainLink />
              </LayerLine>
              <LayerLine as="span" $height={72} $pad={7}>
                <MaskThumb />
              </LayerLine>
              <Name>Design</Name>
              <Expand aria-label="Collapse effects">
                <Icon w={14} h={10}>
                  <path d="M1 8l6-6 6 6" />
                </Icon>
              </Expand>
            </Selected>
            <SubHead>
              <SubEye>
                <Eye />
              </SubEye>
              <SubHeadText>Textures</SubHeadText>
            </SubHead>
            <SubList>
              <SubItem>Base Color</SubItem>
              <SubItem $deep>
                <SubEye>
                  <Eye />
                </SubEye>
                Users\San...CK HERE)
              </SubItem>
              <SubItem>Image Based Light</SubItem>
              <SubItem $deep>
                <SubEye>
                  <Eye />
                </SubEye>
                Program Fi...efault IBL
              </SubItem>
            </SubList>
          </LayerBody>
        </LayerItem>
        <GroupRow name="MANIKIN &amp; SCARF BODY" />
        <GroupRow name="BACKGROUND" />
      </LayerList>
    </ListArea>

    <PanelFooter>
      <FooterButton aria-label="Link layers">
        <Icon w={30} h={16}>
          <g stroke="#8c8c8c" strokeWidth="2.400">
            <path d="M12.500 4A6.500 6.500 0 1 0 12.500 12M17.500 4A6.500 6.500 0 1 1 17.500 12" />
            <path d="M9 8h12" strokeWidth="3" />
          </g>
        </Icon>
      </FooterButton>
      <FooterButton $menu aria-label="Layer style">
        <Icon w={24} h={28}>
          <Fx size={26} x={2} y={22} />
        </Icon>
      </FooterButton>
      <FooterButton aria-label="Add mask">
        <Icon w={26} h={20}>
          <rect width="25" height="20" rx="2" {...solid} />
          <circle cx="12.500" cy="10" r="6" fill={c.base} stroke="none" />
        </Icon>
      </FooterButton>
      <FooterButton $menu aria-label="New adjustment layer">
        <HalfCircle size={22} />
      </FooterButton>
      <FooterButton aria-label="New group">
        <Folder w={24} />
      </FooterButton>
      <FooterButton aria-label="New layer">
        <Icon w={22} h={22}>
          <path d="M1 1h20v20H1zM11 6v10M6 11h10" />
        </Icon>
      </FooterButton>
      <FooterButton aria-label="Delete layer">
        <Icon w={22} h={24}>
          <path d="M0 5h22M3 5v18h16V5M7 4V1h8v3M8 9v10M11 9v10M14 9v10" />
        </Icon>
      </FooterButton>
    </PanelFooter>
    <PanelResize>
      <Grip />
    </PanelResize>
  </Panel>
);

const Defs = styled.svg`
  position: absolute;
`;

export default function App() {
  return (
    <Window>
      <Global />
      <Defs width="0" height="0" aria-hidden="true">
        <linearGradient id="fade">
          <stop offset="0" stopColor="#333" />
          <stop offset="1" stopColor="#d0d0d0" />
        </linearGradient>
      </Defs>

      <TitleBar>
        <Lights>
          <Light $color="#ff5f57" $dirty aria-label="Close" />
          <Light $color="#febc2e" aria-label="Minimize" />
          <Light $color="#28c840" aria-label="Full screen" />
        </Lights>
        <Title>Adobe Photoshop 2022</Title>
      </TitleBar>

      <OptionsBar>
        <Group $width={102} $pad={5} $gap={25}>
          <SideGrip />
          <Plain aria-label="Home">
            <Icon>
              <path {...solid} d="M16 1l16 15h-4v13a1 1 0 0 1-1 1h-7V19h-7v11H5a1 1 0 0 1-1-1V16H0z" />
            </Icon>
          </Plain>
        </Group>
        <Group $width={98} $pad={15} $gap={18}>
          <Plain aria-label="Move tool">
            <Move />
          </Plain>
          <Plain aria-label="Tool presets">
            <Chevron />
          </Plain>
        </Group>
        <Group $width={303} $pad={14} $gap={14}>
          <Check>
            <input type="checkbox" />
            Auto-Select:
          </Check>
          <Picker $width={109}>
            <select aria-label="Auto-select target" defaultValue="Layer">
              <option>Layer</option>
            </select>
            <Chevron />
          </Picker>
        </Group>
        <Group $width={302} $pad={8}>
          <Check $off>
            <input type="checkbox" disabled />
            Show Transform Controls
          </Check>
        </Group>
        <AlignGroup $width={234} $pad={8}>
          <AlignButtons set={alignA} />
        </AlignGroup>
        <AlignGroup $width={234} $pad={8}>
          <AlignButtons set={alignB} />
        </AlignGroup>
        <Group $width={70}>
          <IconButton $width={68} aria-label="More options">
            <Icon>
              <g {...solid}>
                <circle cx="4" cy="16.500" r="3.500" />
                <circle cx="16" cy="16.500" r="3.500" />
                <circle cx="28" cy="16.500" r="3.500" />
              </g>
            </Icon>
          </IconButton>
        </Group>
        <Group $pad={8} $last>
          <ModeLabel>3D Mode:</ModeLabel>
          {modes3d.map(([name, art], i) => (
            <IconButton key={name} $active={i === 0} aria-label={name}>
              <Icon>{art}</Icon>
            </IconButton>
          ))}
        </Group>
        <AppActions>
          <Plain aria-label="Invite">
            <Icon w={36} h={34}>
              <path {...solid} fillRule="evenodd" d="M16 0a15.500 15.500 0 0 1 15 19h-5l-6-2c2-3 4-12-4-13-8 1-6 10-4 13 0 3-6 3-7 6 3 4 7 6 11 6v2A15.500 15.500 0 0 1 16 0z" />
              <path d="M29 21v13M22 27.500h14" />
            </Icon>
          </Plain>
          <Plain aria-label="Search">
            <Icon w={34}>
              <circle cx="12" cy="14" r="11" strokeWidth="2.600" />
              <path d="M19 22l8 8" strokeWidth="4" />
            </Icon>
          </Plain>
          <Plain aria-label="Workspace">
            <Icon w={32} h={28}>
              <path d="M1 1h30v26H1zM1 3h30" />
              <path d="M5 7h4v14H5zM5 12h4M5 16h4" strokeWidth="1.500" />
            </Icon>
          </Plain>
          <Plain aria-label="Workspace menu">
            <Chevron />
          </Plain>
          <Plain aria-label="Share">
            <Icon w={32} h={34}>
              <path d="M8 11H2v20h28V11h-6" strokeWidth="4" />
              <path d="M16 22V5" strokeWidth="3" />
              <path {...solid} d="M16 0l7 9H9z" />
            </Icon>
          </Plain>
        </AppActions>
      </OptionsBar>

      <Workspace>
        <Toolbar aria-label="Tools">
          <DockHeader>
            <Doubles />
          </DockHeader>
          <Grip />
          {tools.map((t, i) => (
            <Tool key={t.name} $active={i === 0} $fly={t.fly} aria-label={t.name}>
              <Icon>{t.art}</Icon>
            </Tool>
          ))}
          <ColorRow>
            <Plain aria-label="Default colors">
              <Icon w={20} h={20}>
                <path {...solid} d="M6 6h14v14H6z" />
                <path d="M1 1h12v12H1z" fill="#111" />
              </Icon>
            </Plain>
            <Plain aria-label="Swap colors">
              <Icon w={20} h={20}>
                <path d="M5 5h10v10" />
                <path {...solid} d="M6 0v10L0 5zM10 14h10l-5 6z" />
              </Icon>
            </Plain>
          </ColorRow>
          <Swatches>
            <Swatch $front aria-label="Foreground color" />
            <Swatch aria-label="Background color" />
          </Swatches>
          <ModeTools>
            {modes.map((t) => (
              <Tool key={t.name} $fly={t.fly} aria-label={t.name}>
                <Icon>{t.art}</Icon>
              </Tool>
            ))}
          </ModeTools>
        </Toolbar>
        <Seam />
        <Document>
          <Tabs>
            <DocTab>
              <Plain aria-label="Close document">
                <Icon w={12} h={12}>
                  <path d="M1 1l10 10M11 1L1 11" stroke="#b5b5b5" strokeWidth="1.600" />
                </Icon>
              </Plain>
              01_Silk-Skarf – BIG – Pack01.psd @ 9.92% (Design, RGB/16#) *
            </DocTab>
          </Tabs>
          <Canvas>
            <ScrollTrack />
          </Canvas>
          <StatusBar>
            <ZoomField aria-label="Zoom level" defaultValue="9.92%" />
            <DocInfo>
              <span>Doc: 143.1M/766.6M</span>
              <Icon w={10} h={18}>
                <path d="M1 0l7 9-7 9" />
              </Icon>
            </DocInfo>
          </StatusBar>
        </Document>
        <Seam />
        <Dock $width={74}>
          <DockHeader $right>
            <Doubles left />
          </DockHeader>
          <DockGroup>
            <Grip />
            <DockSlot>
              <DockButton aria-label="Actions">
                <Icon w={28} h={28}>
                  <path {...solid} d="M0 0l28 14L0 28z" />
                </Icon>
              </DockButton>
            </DockSlot>
          </DockGroup>
          <DockGroup>
            <Grip />
          </DockGroup>
        </Dock>
        <Seam />
        <Dock $width={72}>
          <DockHeader $right>
            <Doubles left />
          </DockHeader>
          {dockGroups.map((group) => (
            <DockGroup key={group[0].name}>
              <Grip />
              {group.map((item) => (
                <DockSlot key={item.name}>
                  <DockButton $active={item.active} aria-label={item.name}>
                    {item.art}
                  </DockButton>
                </DockSlot>
              ))}
            </DockGroup>
          ))}
        </Dock>
        <LayersPanel />
      </Workspace>
    </Window>
  );
}
